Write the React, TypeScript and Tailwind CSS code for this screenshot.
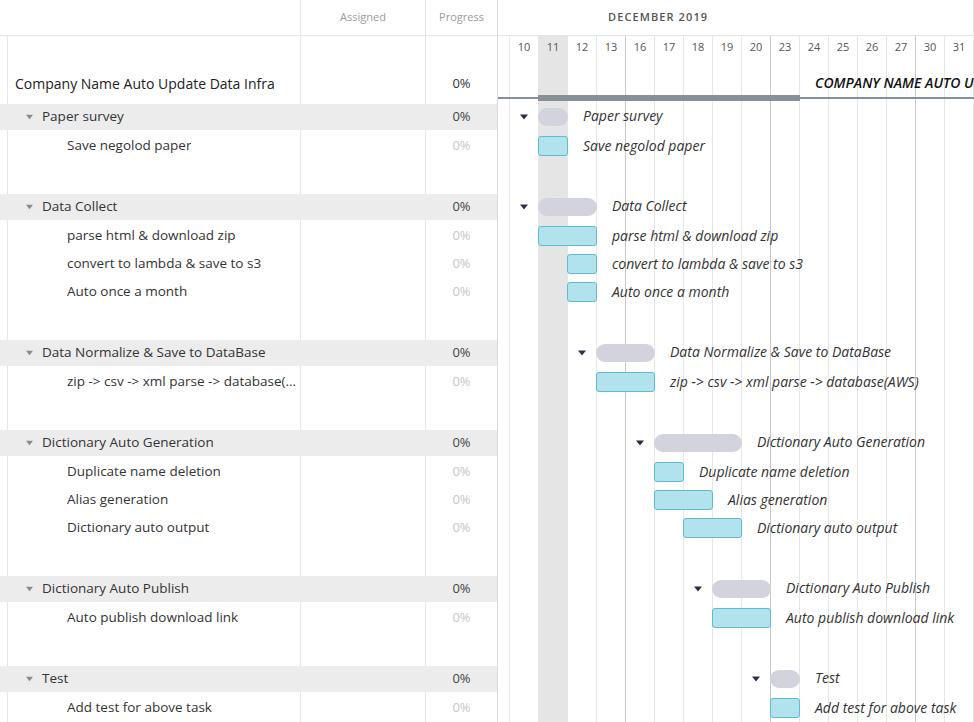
import React from "react";

type Row =
  | { kind: "group"; name: string; start: number; span: number }
  | { kind: "task"; name: string; start: number; span: number }
  | { kind: "blank" };

const DAYS = [9, 10, 11, 12, 13, 16, 17, 18, 19, 20, 23, 24, 25, 26, 27, 30, 31];
const WEEK_END = new Set([13, 20, 27]);
const TODAY = 11;
const COL = 29;
// left edge of the first (clipped) column, relative to the timeline box
const ORIGIN = -18;

const rows: Row[] = [
  { kind: "group", name: "Paper survey", start: 11, span: 1 },
  { kind: "task", name: "Save negolod paper", start: 11, span: 1 },
  { kind: "blank" },
  { kind: "group", name: "Data Collect", start: 11, span: 2 },
  { kind: "task", name: "parse html & download zip", start: 11, span: 2 },
  { kind: "task", name: "convert to lambda & save to s3", start: 12, span: 1 },
  { kind: "task", name: "Auto once a month", start: 12, span: 1 },
  { kind: "blank" },
  { kind: "group", name: "Data Normalize & Save to DataBase", start: 13, span: 2 },
  { kind: "task", name: "zip -> csv -> xml parse -> database(AWS)", start: 13, span: 2 },
  { kind: "blank" },
  { kind: "group", name: "Dictionary Auto Generation", start: 17, span: 3 },
  { kind: "task", name: "Duplicate name deletion", start: 17, span: 1 },
  { kind: "task", name: "Alias generation", start: 17, span: 2 },
  { kind: "task", name: "Dictionary auto output", start: 18, span: 2 },
  { kind: "blank" },
  { kind: "group", name: "Dictionary Auto Publish", start: 19, span: 2 },
  { kind: "task", name: "Auto publish download link", start: 19, span: 2 },
  { kind: "blank" },
  { kind: "group", name: "Test", start: 23, span: 1 },
  { kind: "task", name: "Add test for above task", start: 23, span: 1 },
];

function barLeft(date: number) {
  return ORIGIN + COL * DAYS.indexOf(date);
}

function barWidth(span: number) {
  return COL * span + 1;
}

function Caret({ className, style }: { className: string; style?: React.CSSProperties }) {
  return (
    <svg width="8" height="6" viewBox="0 0 8 6" className={className} style={style}>
      <path d="M0 0.5 H8 L4 5.5 Z" fill="currentColor" />
    </svg>
  );
}

// plain (white) row of the left table, with its column lines
function LeftCells({
  h,
  children,
  progress,
  className = "",
}: {
  h: string;
  children?: React.ReactNode;
  progress?: React.ReactNode;
  className?: string;
}) {
  return (
    <div className={`flex ${h}`}>
      <div className="w-[301px] border-r border-[#e6e6e6] pl-[7px] flex">
        <div className={`flex-1 min-w-0 border-l border-[#e6e6e6] flex ${className}`}>{children}</div>
      </div>
      <div className="w-[125px] border-r border-[#e6e6e6]" />
      <div className="flex-1 flex items-center justify-center">{progress}</div>
    </div>
  );
}

function LeftRow({ row }: { row: Row }) {
  if (row.kind === "blank") return <LeftCells h="h-[34px]" />;

  if (row.kind === "group") {
    return (
      <div className="flex flex-col">
        <div className="h-[26px] bg-[#ececec] flex items-center">
          <div className="w-[301px] flex items-center pl-[26px]">
            <Caret className="text-[#8a8a8a] w-[7px] h-[6px]" />
            <span className="ml-[9px] -mt-[1px] text-[13.5px] text-[#333]">{row.name}</span>
          </div>
          <div className="w-[125px]" />
          <div className="flex-1 text-center text-[13px] text-[#444]">0%</div>
        </div>
        <LeftCells h="h-[2px]" />
      </div>
    );
  }

  return (
    <LeftCells
      h="h-[28px]"
      className="items-center pl-[59px] pr-[1px]"
      progress={<span className="text-[13px] text-[#c6c6c6]">0%</span>}
    >
      <span className="truncate text-[13.5px] text-[#333] -mt-[1px]">{row.name}</span>
    </LeftCells>
  );
}

function GanttRow({ row }: { row: Row }) {
  if (row.kind === "blank") return <div className="h-[34px]" />;

  const left = barLeft(row.start);
  const width = barWidth(row.span);

  if (row.kind === "group") {
    return (
      <div className="relative h-[28px]">
        <Caret className="absolute top-[10px] text-[#2c2d48]" style={{ left: left - 18 }} />
        <div
          className="absolute top-[4px] h-[18px] rounded-full bg-[#d2d3dc]"
          style={{ left, width }}
        />
        <span
          className="absolute top-[3px] leading-[18px] text-[14px] italic text-[#333] whitespace-nowrap"
          style={{ left: left + width + 15 }}
        >
          {row.name}
        </span>
      </div>
    );
  }

  return (
    <div className="relative h-[28px]">
      <div
        className="absolute top-[4px] h-[20px] rounded-[3px] bg-[#b2e2ec] border border-[#5cbcd6]"
        style={{ left, width }}
      />
      <span
        className="absolute top-[5px] leading-[18px] text-[14px] italic text-[#333] whitespace-nowrap"
        style={{ left: left + width + 15 }}
      >
        {row.name}
      </span>
    </div>
  );
}

export default function App() {
  return (
    <div className="w-[974px] h-[722px] overflow-hidden bg-white flex font-['Open_Sans',sans-serif]">
      {/* Left table */}
      <div className="w-[498px] border-r border-[#dcdcdc] flex flex-col shrink-0">
        <div className="h-[36px] border-b border-[#e6e6e6] flex text-[11px] text-[#9a9a9a]">
          <div className="w-[301px] border-r border-[#e6e6e6]" />
          <div className="w-[125px] border-r border-[#e6e6e6] flex items-center justify-center">Assigned</div>
          <div className="flex-1 flex items-center justify-center">Progress</div>
        </div>

        <LeftCells
          h="h-[68px]"
          className="items-center pl-[7px] pt-[27px]"
          progress={<span className="pt-[27px] text-[13px] text-[#333]">0%</span>}
        >
          <span className="text-[14px] text-[#222]">Company Name Auto Update Data Infra</span>
        </LeftCells>

        {rows.map((row, i) => (
          <LeftRow key={i} row={row} />
        ))}
      </div>

      {/* Timeline */}
      <div className="flex-1 min-w-0 flex flex-col overflow-hidden">
        <div className="h-[36px] border-b border-[#e6e6e6] border-r flex items-center pl-[110px]">
          <span className="text-[11px] font-semibold tracking-[1.1px] text-[#555]">DECEMBER 2019</span>
        </div>

        <div className="relative flex-1">
          <div className="flex h-full -ml-[17px]">
            {DAYS.map((d) => (
              <div
                key={d}
                className={`w-[29px] shrink-0 h-full border-r ${
                  WEEK_END.has(d) ? "border-[#c8c8c8]" : "border-[#e6e6e6]"
                } ${d === TODAY ? "bg-[#e5e5e5]" : ""}`}
              >
                <div className="pt-[4px] leading-[14px] text-center text-[11px] text-[#555]">{d}</div>
              </div>
            ))}
          </div>

          <div className="absolute inset-0">
            {/* project summary */}
            <div className="relative h-[68px]">
              <div className="absolute left-0 right-0 top-[61px] h-[2px] bg-[#878f97]" />
              <div
                className="absolute top-[59px] h-[6px] bg-[#878f97]"
                style={{ left: barLeft(11), width: barWidth(9) }}
              />
              <span
                className="absolute top-[38px] leading-[18px] text-[14px] font-semibold italic text-[#111] whitespace-nowrap"
                style={{ left: barLeft(11) + barWidth(9) + 15 }}
              >
                COMPANY NAME AUTO UPDATE DATA INFRA
              </span>
            </div>

            {rows.map((row, i) => (
              <GanttRow key={i} row={row} />
            ))}
          </div>
        </div>
      </div>
    </div>
  );
}
